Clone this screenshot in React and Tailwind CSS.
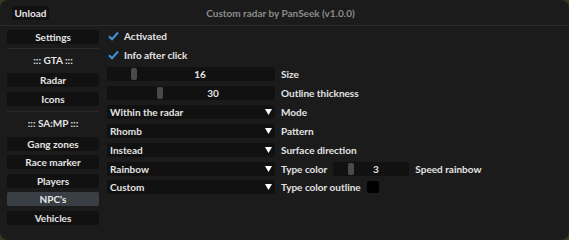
import React from 'react'

const font = { fontFamily: '"Lato", "DejaVu Sans", sans-serif' }

function NavButton({ label, active, className = '' }) {
  return (
    <div
      className={`h-[14px] w-[92px] rounded-[2px] flex items-center justify-center text-[10px] font-bold leading-none ${
        active ? 'bg-[#3a3f45] text-[#e8e8e8]' : 'bg-[#111111] text-[#e4e4e4]'
      } ${className}`}
    >
      {label}
    </div>
  )
}

function Check({ label }) {
  return (
    <div className="h-[14px] flex items-center">
      <div className="w-[12px] h-[12px] flex items-center justify-center">
        <svg width="11" height="10" viewBox="0 0 11 10">
          <path d="M1 5.2 L4 8.2 L10 1.5" fill="none" stroke="#3d93d6" strokeWidth="2" />
        </svg>
      </div>
      <span className="ml-[5px] text-[10px] font-bold text-[#e4e4e4] leading-none">{label}</span>
    </div>
  )
}

function Slider({ value, grab, width = 168 }) {
  return (
    <div
      className="h-[14px] rounded-[2px] bg-[#111111] flex items-center"
      style={{ width }}
    >
      <div className="w-[6px] h-[12px] rounded-[2px] bg-[#4a4a4a]" style={{ marginLeft: grab }} />
      <span
        className="text-[10px] font-bold text-[#e4e4e4] leading-none text-center"
        style={{ width: width - grab - 12 - 6 }}
      >
        {value}
      </span>
    </div>
  )
}

function Combo({ value }) {
  return (
    <div className="h-[14px] w-[168px] rounded-[2px] bg-[#111111] flex items-center justify-between pl-[3px] pr-[3px]">
      <span className="text-[10px] font-bold text-[#e4e4e4] leading-none">{value}</span>
      <svg width="7" height="6" viewBox="0 0 7 6">
        <path d="M0 0 H7 L3.5 6 Z" fill="#ffffff" />
      </svg>
    </div>
  )
}

function Label({ children }) {
  return <span className="text-[10px] font-bold text-[#e4e4e4] leading-none">{children}</span>
}

export default function App() {
  return (
    <div className="w-[569px] h-[240px] bg-[#3b3722]" style={font}>
      <div className="w-full h-full rounded-[8px] bg-[#1b1b1b] flex flex-col overflow-hidden">
        {/* Title bar */}
        <div className="h-[26px] border-b border-[#2c2c2c] grid grid-cols-[1fr_auto_1fr] items-center pr-[8px]">
          <div className="pl-[12px]">
            <div className="h-[14px] w-[37px] bg-[#111111] rounded-[2px] flex items-center justify-center text-[10px] font-bold text-[#e6e6e6] leading-none">
              Unload
            </div>
          </div>
          <span className="text-[10px] font-bold text-[#8c8c8c] leading-none">Custom radar by PanSeek (v1.0.0)</span>
          <div />
        </div>

        <div className="flex pl-[7px]">
          {/* Left menu */}
          <div className="flex flex-col w-[92px] pt-[4px]">
            <NavButton label="Settings" />
            <div className="mt-[4px] h-px bg-[#2a2a2a]" />
            <div className="mt-[4px] h-[14px] flex items-center justify-center text-[10px] font-bold text-[#e4e4e4] leading-none">::: GTA :::</div>
            <NavButton label="Radar" className="mt-[6px]" />
            <NavButton label="Icons" className="mt-[5px]" />
            <div className="mt-[5px] h-px bg-[#2a2a2a]" />
            <div className="mt-[4px] h-[14px] flex items-center justify-center text-[10px] font-bold text-[#e4e4e4] leading-none">::: SA:MP :::</div>
            <NavButton label="Gang zones" className="mt-[7px]" />
            <NavButton label="Race marker" className="mt-[4px]" />
            <NavButton label="Players" className="mt-[5px]" />
            <NavButton label="NPC's" active className="mt-[4px]" />
            <NavButton label="Vehicles" className="mt-[5px]" />
          </div>

          {/* Right settings */}
          <div className="ml-[8px] pt-[3px] flex flex-col gap-[5px]">
            <Check label="Activated" />
            <Check label="Info after click" />
            <div className="flex items-center gap-[6px]">
              <Slider value="16" grab={24} />
              <Label>Size</Label>
            </div>
            <div className="flex items-center gap-[6px]">
              <Slider value="30" grab={50} />
              <Label>Outline thickness</Label>
            </div>
            <div className="flex items-center gap-[6px]">
              <Combo value="Within the radar" />
              <Label>Mode</Label>
            </div>
            <div className="flex items-center gap-[6px]">
              <Combo value="Rhomb" />
              <Label>Pattern</Label>
            </div>
            <div className="flex items-center gap-[6px]">
              <Combo value="Instead" />
              <Label>Surface direction</Label>
            </div>
            <div className="flex items-center gap-[6px]">
              <Combo value="Rainbow" />
              <Label>Type color</Label>
              <Slider value="3" grab={15} width={76} />
              <Label>Speed rainbow</Label>
            </div>
            <div className="flex items-center gap-[6px] -mt-px">
              <Combo value="Custom" />
              <Label>Type color outline</Label>
              <div className="w-[12px] h-[12px] rounded-[2px] bg-black" />
            </div>
          </div>
        </div>
      </div>
    </div>
  )
}
